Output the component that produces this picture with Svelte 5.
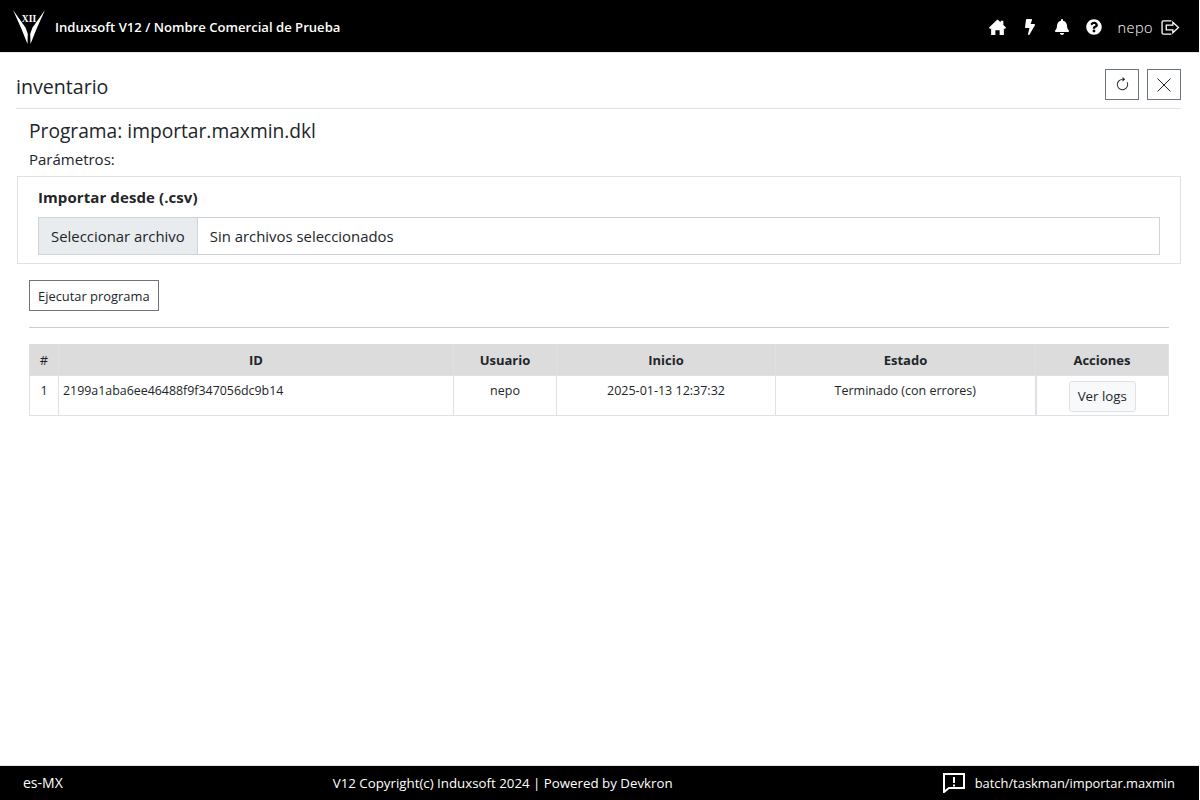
<script lang="ts">
  const columns = ['#', 'ID', 'Usuario', 'Inicio', 'Estado', 'Acciones'];
  const runs = [
    {
      n: 1,
      id: '2199a1aba6ee46488f9f347056dc9b14',
      user: 'nepo',
      start: '2025-01-13 12:37:32',
      status: 'Terminado (con errores)'
    }
  ];
</script>

<div class="page">
  <header class="topbar">
    <div class="brand">
      <svg class="logo" viewBox="0 0 34 36" width="34" height="36">
        <path fill="#fff" d="M1 1 L9.500 20 L15.500 35 L15.800 25 L13.500 18.500 Z" />
        <path fill="#fff" d="M33 1 L24.500 20 L18.500 35 L18.200 25 L20.500 18.500 Z" />
        <text x="17" y="12.500" text-anchor="middle" class="logo-text">XII</text>
      </svg>
      <span class="brand-name">Induxsoft V12 / Nombre Comercial de Prueba</span>
    </div>
    <nav class="top-actions">
      <span class="slot">
        <svg viewBox="0 0 16 15" width="17" height="16"><path fill="#fff" d="M8 .5 L11 3 V1.500 H13.500 V5.500 L16 8 L15 9.500 L14 8.700 V15 H10 V10.500 H6 V15 H2 V8.700 L1 9.500 L0 8 Z" /></svg>
      </span>
      <span class="slot">
        <svg viewBox="0 0 320 512" width="10" height="16"><path fill="#fff" d="M296 160H180.600l42.600-129.800C227.200 15 215.700 0 200 0H56C44 0 33.800 8.900 32.200 20.800l-32 240C-1.700 275.200 9.500 288 24 288h118.700L96.600 482.500c-3.600 15.200 8 29.500 23.300 29.500 8.400 0 16.400-4.400 20.800-12l176-304c9.300-15.900-2.200-36-20.700-36z" /></svg>
      </span>
      <span class="slot">
        <svg viewBox="0 0 448 512" width="14" height="16"><path fill="#fff" d="M224 512c35.300 0 64-28.700 64-64H160c0 35.300 28.700 64 64 64zm215.400-149.700c-19.300-20.800-55.500-52-55.500-154.300 0-77.700-54.500-139.900-127.900-155.200V32c0-17.700-14.300-32-32-32s-32 14.300-32 32v20.800C118.600 68.100 64.100 130.300 64.100 208c0 102.300-36.200 133.500-55.500 154.300-6 6.400-8.700 14.100-8.600 21.700.1 16.400 13 32 32.100 32h383.800c19.100 0 32-15.600 32.100-32 .1-7.600-2.600-15.300-8.600-21.700z" /></svg>
      </span>
      <span class="slot">
        <svg viewBox="0 0 512 512" width="16" height="16"><path fill="#fff" d="M504 256c0 137-111 248-248 248S8 393 8 256 119 8 256 8s248 111 248 248zM262.700 90c-54.500 0-89.300 23-116.500 63.800-3.500 5.300-2.400 12.400 2.700 16.300l34.700 26.300c5.200 3.900 12.600 3 16.700-2.100 17.900-22.700 30.100-35.800 57.300-35.800 20.400 0 45.700 13.100 45.700 32.900 0 15-12.400 22.700-32.500 34C247.100 238.500 216 254.900 216 296v4c0 6.600 5.400 12 12 12h56c6.600 0 12-5.400 12-12v-1.300c0-28.500 83.200-29.700 83.200-106.700 0-58-60.200-102-116.500-102zM256 338c-25.400 0-46 20.600-46 46s20.600 46 46 46 46-20.600 46-46-20.600-46-46-46z" /></svg>
      </span>
      <span class="user">nepo</span>
      <svg viewBox="0 0 20 16" width="19" height="15" fill="none" stroke="#fff" stroke-width="1.400"><path d="M11 1H2.500A1.500 1.500 0 0 0 1 2.500v11A1.500 1.500 0 0 0 2.500 15H11" /><path d="M5.500 5.500h7V2.500L18.500 8l-6 5.500v-3h-7z" /></svg>
    </nav>
  </header>

  <main class="content">
    <div class="title-row">
      <h1>inventario</h1>
      <div class="title-actions">
        <button class="icon-btn" aria-label="Recargar">
          <svg viewBox="0 0 16 16" width="15" height="15" fill="#212529"><path fill-rule="evenodd" d="M8 3a5 5 0 1 0 4.546 2.914.5.5 0 0 1 .908-.417A6 6 0 1 1 8 2z" /><path d="M8 4.466V.534a.25.25 0 0 1 .41-.192l2.360 1.966c.12.1.12.284 0 .384L8.410 4.658A.25.25 0 0 1 8 4.466" /></svg>
        </button>
        <button class="icon-btn" aria-label="Cerrar">
          <svg viewBox="0 0 16 16" width="16" height="16" fill="none" stroke="#212529" stroke-width="1"><path d="M1.500 1.500l13 13M14.500 1.500l-13 13" /></svg>
        </button>
      </div>
    </div>

    <section class="program">
      <h2>Programa: importar.maxmin.dkl</h2>
      <p class="params-label">Parámetros:</p>
    </section>

    <div class="param-box">
      <div class="param-name">Importar desde (.csv)</div>
      <div class="file-input">
        <span class="file-btn">Seleccionar archivo</span>
        <span class="file-name">Sin archivos seleccionados</span>
      </div>
    </div>

    <section class="runs">
      <button class="run-btn">Ejecutar programa</button>
      <hr />
      <table>
        <colgroup>
          <col style="width: 29px" />
          <col style="width: 395px" />
          <col style="width: 103px" />
          <col style="width: 219px" />
          <col style="width: 260px" />
          <col style="width: 133px" />
        </colgroup>
        <thead>
          <tr>
            {#each columns as col}
              <th class:plain={col === '#'}>{col}</th>
            {/each}
          </tr>
        </thead>
        <tbody>
          {#each runs as run}
            <tr>
              <td>{run.n}</td>
              <td class="left">{run.id}</td>
              <td>{run.user}</td>
              <td>{run.start}</td>
              <td>{run.status}</td>
              <td class="action"><button class="logs-btn">Ver logs</button></td>
            </tr>
          {/each}
        </tbody>
      </table>
    </section>
  </main>

  <footer class="bottombar">
    <span class="locale">es-MX</span>
    <span class="copy">V12 Copyright(c) Induxsoft 2024 | Powered by Devkron</span>
    <span class="route">
      <svg viewBox="0 0 22 20" width="22" height="20" fill="none" stroke="#fff" stroke-width="2"><path d="M1 1H21V15H6L1 19Z" /><path d="M11 4v6M11 11.500v2" /></svg>
      batch/taskman/importar.maxmin
    </span>
  </footer>
</div>

<style>
  :global(body) {
    margin: 0;
    background: #fff;
    color: #212529;
    font-family: "Open Sans", "Noto Sans", sans-serif;
    font-size: 14px;
  }

  .page {
    width: 1199px;
    height: 800px;
    display: flex;
    flex-direction: column;
  }

  .topbar {
    flex: 0 0 53px;
    box-sizing: border-box;
    background: #000;
    border-bottom: 1px solid #e6e6e6;
    color: #fff;
    display: flex;
    align-items: center;
    justify-content: space-between;
    padding: 0 19px 0 12px;
  }

  .brand {
    display: flex;
    align-items: center;
    gap: 9px;
  }

  .logo {
    display: block;
    margin-top: 1px;
  }

  .logo-text {
    fill: #fff;
    font-family: "Liberation Serif", serif;
    font-size: 9.500px;
    font-weight: 700;
  }

  .brand-name {
    font-size: 13.100px;
    font-weight: 600;
    padding-top: 2px;
  }

  .top-actions {
    display: flex;
    align-items: center;
    padding-top: 2px;
  }

  .slot {
    width: 32px;
    display: flex;
    justify-content: center;
  }

  .user {
    font-size: 14.500px;
    font-weight: 300;
    margin: 0 8px;
    letter-spacing: 0.45px;
  }

  .content {
    flex: 1;
    min-height: 0;
    padding: 0 18px 0 17px;
  }

  .title-row {
    height: 56px;
    box-sizing: border-box;
    margin-left: -1px;
    display: flex;
    align-items: flex-end;
    justify-content: space-between;
    border-bottom: 1px solid #dee2e6;
    padding-bottom: 8px;
  }

  h1 {
    margin: 0;
    font-size: 19.600px;
    font-weight: 400;
    line-height: 26px;
  }

  .title-actions {
    display: flex;
    gap: 8px;
  }

  .icon-btn {
    width: 34px;
    height: 31px;
    padding: 0;
    display: flex;
    align-items: center;
    justify-content: center;
    background: #fff;
    border: 1px solid #6c757d;
  }

  .program {
    padding: 0 12px;
  }

  h2 {
    margin: 8px 0 0;
    font-size: 19.200px;
    font-weight: 400;
    line-height: 27px;
  }

  .params-label {
    margin: 5px 0 7px;
    font-size: 15px;
    font-weight: 500;
    line-height: 20px;
  }

  .param-box {
    border: 1px solid #dee2e6;
    padding: 10px 20px 8px;
  }

  .param-name {
    font-size: 15px;
    font-weight: 700;
    letter-spacing: 0.09px;
    line-height: 20px;
    margin-bottom: 10px;
  }

  .file-input {
    display: flex;
    height: 38px;
    box-sizing: border-box;
    border: 1px solid #ced4da;
    line-height: 36px;
    font-size: 14.900px;
  }

  .file-btn {
    background: #e9ecef;
    border-right: 1px solid #ced4da;
    padding: 0 12px;
  }

  .file-name {
    padding: 0 12px;
  }

  .runs {
    padding: 16px 12px 0;
  }

  .run-btn {
    display: block;
    height: 31px;
    padding: 0 8px;
    background: #fff;
    border: 1px solid #6c757d;
    color: #212529;
    font: inherit;
    font-size: 12.900px;
  }

  hr {
    margin: 16px 0;
    border: 0;
    border-top: 1px solid #ccc;
  }

  table {
    width: 1139px;
    table-layout: fixed;
    border-collapse: collapse;
    font-size: 12.500px;
  }

  th {
    height: 31px;
    box-sizing: border-box;
    padding: 1px 0 0;
    background: #dcdcdc;
    font-size: 13px;
    font-weight: 700;
    border: 1px solid #dee2e6;
    border-width: 0 1px;
  }

  th.plain {
    font-weight: 400;
  }

  td {
    height: 40px;
    padding: 5px 4px 0;
    box-sizing: border-box;
    vertical-align: top;
    text-align: center;
    border: 1px solid #dee2e6;
    line-height: 20px;
  }

  td.left {
    text-align: left;
    font-size: 12.400px;
  }

  td.action {
    padding: 4px 0 0;
    border-left-width: 2px;
  }

  .logs-btn {
    height: 31px;
    margin-top: 1px;
    padding: 0 8px;
    background: #f8f9fa;
    border: 1px solid #dee2e6;
    border-radius: 3px;
    color: #212529;
    font: inherit;
    font-size: 13.300px;
  }

  .bottombar {
    flex: 0 0 35px;
    box-sizing: border-box;
    background: #000;
    border-top: 1px solid #e6e6e6;
    color: #fff;
    display: flex;
    align-items: center;
    justify-content: space-between;
    padding: 0 24px 1px 23px;
    font-size: 13.300px;
  }

  .locale {
    font-size: 14px;
  }

  .route {
    display: flex;
    align-items: center;
    gap: 10px;
    font-size: 12.900px;
  }
</style>
